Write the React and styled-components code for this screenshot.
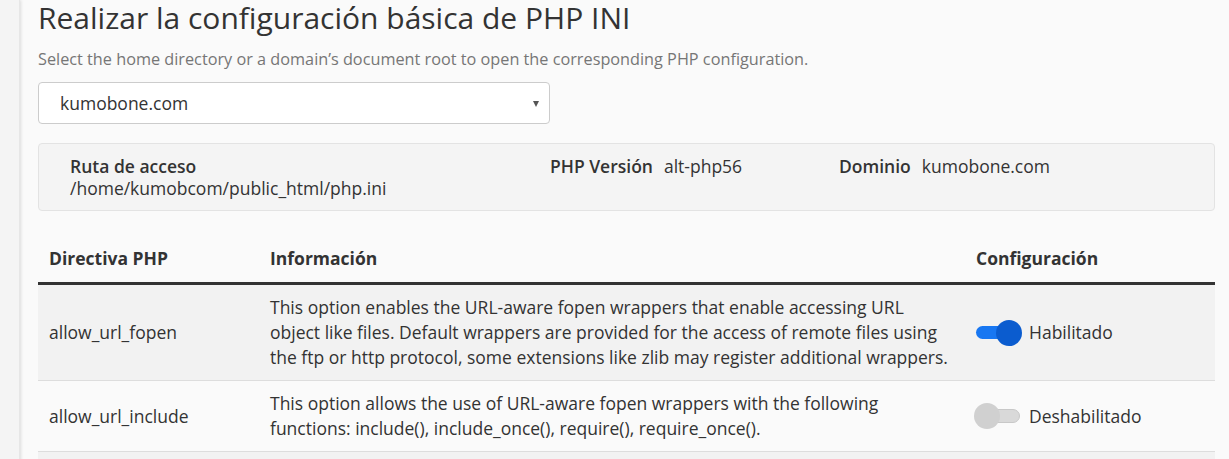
import React from "react";
import styled, { createGlobalStyle } from "styled-components";

const Global = createGlobalStyle`
  html, body { margin: 0; padding: 0; overflow: hidden; }
  body {
    background: #fafafa;
    font-family: "Open Sans", "Liberation Sans", sans-serif;
    color: #333;
  }
`;

const Page = styled.div`
  display: flex;
  min-height: 459px;
`;

const Sidebar = styled.aside`
  width: 19px;
  flex: none;
  background: #f4f4f4;
  box-shadow: 1px 0 3px rgba(0, 0, 0, 0.12);
  border-right: 1px solid #e6e6e6;
`;

const Main = styled.main`
  flex: 1;
  padding: 0 14px 0 18px;
  min-width: 0;
`;

const Title = styled.h1`
  margin: 1px 0 0;
  font-size: 30px;
  line-height: 33px;
  font-weight: 400;
  color: #333;
`;

const Subtitle = styled.p`
  margin: 13px 0 0;
  font-size: 16.25px;
  line-height: 24px;
  color: #767676;
`;

const Select = styled.div`
  margin-top: 11px;
  width: 512px;
  height: 42px;
  box-sizing: border-box;
  border: 1px solid #cccccc;
  border-radius: 4px;
  background: #fff;
  display: flex;
  align-items: center;
  justify-content: space-between;
  padding: 0 10px 0 21px;
  font-size: 17.5px;
  color: #333;
`;

const Caret = styled.span`
  width: 0;
  height: 0;
  border-left: 3.5px solid transparent;
  border-right: 3.5px solid transparent;
  border-top: 6px solid #555;
  margin-top: 1px;
`;

const InfoPanel = styled.section`
  margin-top: 19px;
  box-sizing: border-box;
  background: #f4f4f4;
  border: 1px solid #e3e3e3;
  border-radius: 4px;
  padding: 11px 0 11px 31px;
  display: grid;
  grid-template-columns: 480px 289px 1fr;
  font-size: 17.5px;
  line-height: 22px;
`;

const InfoItem = styled.div`
  display: flex;
  flex-direction: ${(p) => (p.$stack ? "column" : "row")};
  gap: ${(p) => (p.$stack ? "0" : "11px")};
  align-items: flex-start;
`;

const Label = styled.span`
  font-weight: 600;
  color: #333;
`;

const Value = styled.span`
  color: #333;
`;

const Table = styled.table`
  margin-top: 25px;
  width: 100%;
  border-collapse: collapse;
  font-size: 17.5px;
  line-height: 25px;
  table-layout: fixed;
`;

const Col = styled.col`
  width: ${(p) => p.$w};
`;

const Th = styled.th`
  text-align: left;
  font-weight: 700;
  color: #333;
  padding: 10px 11px 11px;
  border-bottom: 3px solid #333;
`;

const Tr = styled.tr`
  background: ${(p) => (p.$odd ? "#f2f2f2" : "#fafafa")};
  border-bottom: 1px solid #dddddd;
`;

const Td = styled.td`
  padding: 10px 11px;
  vertical-align: middle;
  color: #333;
`;

const ConfigCell = styled.div`
  display: flex;
  align-items: center;
  gap: 7px;
`;

const SwitchBox = styled.span`
  position: relative;
  display: inline-block;
  width: 46px;
  height: 26px;
  flex: none;
`;

const Track = styled.span`
  position: absolute;
  top: ${(p) => (p.$on ? "6.5px" : "6px")};
  left: ${(p) => (p.$on ? "0" : "10px")};
  right: ${(p) => (p.$on ? "10px" : "2px")};
  height: ${(p) => (p.$on ? "13px" : "14px")};
  border-radius: 8px;
  box-sizing: border-box;
  background: ${(p) => (p.$on ? "#1877f2" : "#d9d9d9")};
  border: ${(p) => (p.$on ? "none" : "1px solid #c8c8c8")};
`;

const Knob = styled.span`
  position: absolute;
  top: 0;
  left: ${(p) => (p.$on ? "20px" : "-2px")};
  width: 26px;
  height: 26px;
  border-radius: 50%;
  background: ${(p) => (p.$on ? "#0b5ccf" : "#d0d0d0")};
`;

const Switch = ({ on }) => (
  <SwitchBox>
    <Track $on={on} />
    <Knob $on={on} />
  </SwitchBox>
);

const rows = [
  {
    name: "allow_url_fopen",
    info:
      "This option enables the URL-aware fopen wrappers that enable accessing URL object like files. Default wrappers are provided for the access of remote files using the ftp or http protocol, some extensions like zlib may register additional wrappers.",
    on: true,
  },
  {
    name: "allow_url_include",
    info:
      "This option allows the use of URL-aware fopen wrappers with the following functions: include(), include_once(), require(), require_once().",
    on: false,
  },
  {
    name: "display_errors",
    info:
      "This determines whether errors should be printed to the screen as part of the output or if they should be hidden from the user.",
    on: false,
  },
];

export default function App() {
  return (
    <>
      <Global />
      <Page>
        <Sidebar />
        <Main>
          <Title>Realizar la configuración básica de PHP INI</Title>
          <Subtitle>
            Select the home directory or a domain’s document root to open the
            corresponding PHP configuration.
          </Subtitle>
          <Select>
            <span>kumobone.com</span>
            <Caret />
          </Select>
          <InfoPanel>
            <InfoItem $stack>
              <Label>Ruta de acceso</Label>
              <Value>/home/kumobcom/public_html/php.ini</Value>
            </InfoItem>
            <InfoItem>
              <Label>PHP Versión</Label>
              <Value>alt-php56</Value>
            </InfoItem>
            <InfoItem>
              <Label>Dominio</Label>
              <Value>kumobone.com</Value>
            </InfoItem>
          </InfoPanel>
          <Table>
            <colgroup>
              <Col $w="221px" />
              <Col $w="706px" />
              <Col $w="250px" />
            </colgroup>
            <thead>
              <tr>
                <Th>Directiva PHP</Th>
                <Th>Información</Th>
                <Th>Configuración</Th>
              </tr>
            </thead>
            <tbody>
              {rows.map((r, i) => (
                <Tr key={r.name} $odd={i % 2 === 0}>
                  <Td>{r.name}</Td>
                  <Td>{r.info}</Td>
                  <Td>
                    <ConfigCell>
                      <Switch on={r.on} />
                      <span>{r.on ? "Habilitado" : "Deshabilitado"}</span>
                    </ConfigCell>
                  </Td>
                </Tr>
              ))}
            </tbody>
          </Table>
        </Main>
      </Page>
    </>
  );
}
